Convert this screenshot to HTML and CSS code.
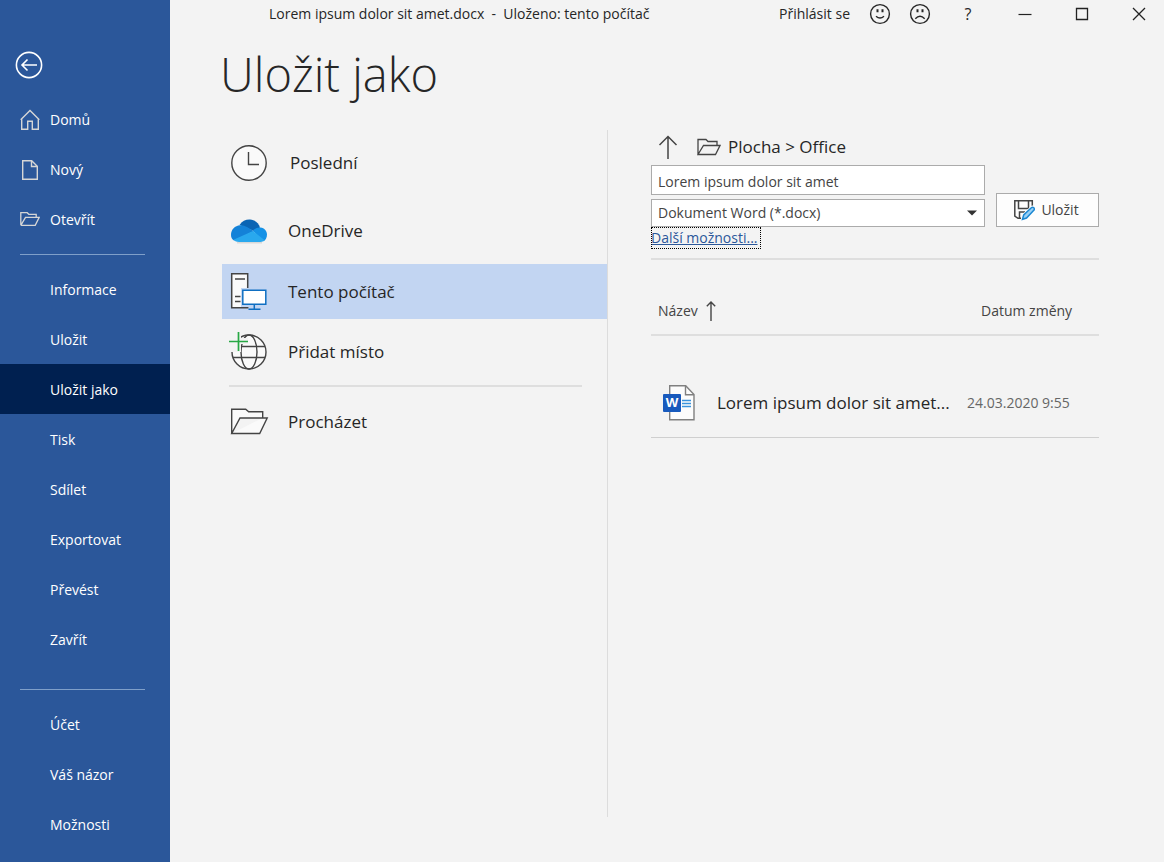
FILE: index.html
```html
<!DOCTYPE html>
<html lang="cs">
<head>
<meta charset="utf-8">
<meta name="viewport" content="width=device-width, initial-scale=1">
<title>Uložit jako</title>
<link rel="stylesheet" href="styles.css">
</head>
<body>
<div class="app">
  <nav class="sidebar" aria-label="Soubor">
    <button class="back" type="button" aria-label="Zpět">
      <svg width="28" height="28" viewBox="0 0 28 28" fill="none" stroke="#fff" stroke-width="1.6"><circle cx="14" cy="14" r="12.6"/><path d="M7 14h15M12.5 8.5 7 14l5.5 5.5"/></svg>
    </button>
    <a class="nav-item" href="#"><svg width="20" height="22" viewBox="0 0 20 22" fill="none" stroke="#d6d6d6" stroke-width="1.4"><path d="M.7 10.8 10 1.5l9.3 9.3M1.7 10v10.3h6v-8h4.6v8h6V10"/></svg>Domů</a>
    <a class="nav-item" href="#"><svg width="20" height="22" viewBox="0 0 20 22" fill="none" stroke="#d6d6d6" stroke-width="1.4"><path d="M2.7 1.7h9l5.6 5.6v13H2.7zM11.5 1.7v5.8h5.8"/></svg>Nový</a>
    <a class="nav-item" href="#"><svg width="20" height="22" viewBox="0 0 20 22" fill="none" stroke="#d6d6d6" stroke-width="1.3"><path d="M.8 16.3V3.700h6.400l1.600 1.600h7.400v3M.8 16.300h14.400l4-8H5.500L.8 16.300"/></svg>Otevřít</a>
    <hr class="nav-line">
    <a class="nav-item plain" href="#">Informace</a>
    <a class="nav-item plain" href="#">Uložit</a>
    <a class="nav-item plain current" href="#" aria-current="page">Uložit jako</a>
    <a class="nav-item plain" href="#">Tisk</a>
    <a class="nav-item plain" href="#">Sdílet</a>
    <a class="nav-item plain" href="#">Exportovat</a>
    <a class="nav-item plain" href="#">Převést</a>
    <a class="nav-item plain" href="#">Zavřít</a>
    <hr class="nav-line lower">
    <a class="nav-item plain" href="#">Účet</a>
    <a class="nav-item plain" href="#">Váš názor</a>
    <a class="nav-item plain" href="#">Možnosti</a>
  </nav>

  <div class="main">
    <header class="titlebar">
      <span class="doc-title">Lorem ipsum dolor sit amet.docx &nbsp;- &nbsp;Uloženo: tento počítač</span>
      <button class="sign-in" type="button">Přihlásit se</button>
      <button class="face" type="button" aria-label="Spokojenost"><svg width="22" height="22" viewBox="0 0 22 22" fill="none" stroke="#262626" stroke-width="1.4"><circle cx="11" cy="11" r="9.4"/><path d="M7 13.2q4 3.6 8 0"/><path d="M8.500 6.200v3M13.500 6.200v3" stroke-width="2"/></svg></button>
      <button class="face" type="button" aria-label="Nespokojenost"><svg width="22" height="22" viewBox="0 0 22 22" fill="none" stroke="#262626" stroke-width="1.4"><circle cx="11" cy="11" r="9.4"/><path d="M6.3 15.8q4.7-5 9.4 0"/><path d="M8.500 6.200v3M13.500 6.200v3" stroke-width="2"/></svg></button>
      <button class="help" type="button" aria-label="Nápověda">?</button>
      <button class="win" type="button" aria-label="Minimalizovat"><svg width="14" height="14" viewBox="0 0 14 14" stroke="#222"><path d="M.5 7.5h13" stroke-width="1.2"/></svg></button>
      <button class="win" type="button" aria-label="Maximalizovat"><svg width="14" height="14" viewBox="0 0 14 14" fill="none" stroke="#222" stroke-width="1.3"><path d="M1.5 1.5h11v11h-11z"/></svg></button>
      <button class="win" type="button" aria-label="Zavřít okno"><svg width="14" height="14" viewBox="0 0 14 14" stroke="#222" stroke-width="1.3"><path d="m1 1 12 12M13 1 1 13"/></svg></button>
    </header>

    <h1 class="heading">Uložit jako</h1>

    <div class="columns">
      <section class="places" aria-label="Umístění">
        <button class="place recent" type="button"><svg width="40" height="40" viewBox="0 0 40 40" fill="none" stroke="#444" stroke-width="1.4"><circle cx="20" cy="20" r="17.2" fill="#fafafa"/><path d="M19.5 9v12.5H30"/></svg>Poslední</button>
        <button class="place onedrive" type="button"><svg width="40" height="40" viewBox="0 0 40 40"><path d="M8 31.500h25" stroke="#d8d8d8" stroke-width="2"/><path fill="#0a64b4" d="M10.5 14C13 10 17 8.400 21 8.600c5 .3 8.600 3.400 10 8L25 20z"/><path fill="#1482d8" d="M2 24c0-5.500 4-9.500 9-9.800 3-.3 5 .6 7 1.800l7 4.200L5 29.500C3 28.300 2 26.500 2 24z"/><path fill="#1591e6" d="M24 20c2-2.600 4.500-3.800 7.500-3.500 4 .5 6.500 3.600 6.500 7.300 0 3-1.500 5.300-3.600 6.500z"/><path fill="#29a8ee" d="M4.500 28.800 24 20l11.700 9.300C34.500 30.600 33 31 31.500 31H10c-2.200 0-4.200-.8-5.500-2.200z"/></svg>OneDrive</button>
        <button class="place selected" type="button" aria-pressed="true"><svg width="40" height="40" viewBox="0 0 40 40" fill="none" stroke="#444" stroke-width="1.5"><path fill="#fafafa" d="M2.700 1.700h16v34h-16z"/><path d="M6 7h10M6 24.500h5.500M6 29.500h5.500"/><path d="M12 16h28v19H12z" fill="#c2d5f2" stroke="none"/><path fill="#fff" stroke="#0f6fc2" d="M13.800 18.300h23v14h-23z"/><path stroke="#0f6fc2" d="M25.300 32.300v4.600M19.500 37.200h12"/></svg>Tento počítač</button>
        <button class="place add" type="button"><svg width="40" height="40" viewBox="0 0 40 40" fill="none" stroke="#444" stroke-width="1.4"><circle cx="20" cy="20" r="17" fill="#fafafa"/><ellipse cx="20" cy="20" rx="8" ry="17"/><path d="M4 14.500h32M4 25.500h32"/><path d="M0 0h12v6h7v6h-7v8H0z" fill="#f3f3f3" stroke="none"/><path d="M9.500 0v19M0 9.500h19" stroke="#27a844" stroke-width="1.700"/></svg>Přidat místo</button>
        <hr class="place-line">
        <button class="place" type="button"><svg width="40" height="40" viewBox="0 0 40 40" fill="none" stroke="#444" stroke-width="1.4"><path fill="#fafafa" d="M2.700 31.500V7.200h14l3 2.500h14V16M2.700 31.500h28L38.200 16H11z"/></svg>Procházet</button>
      </section>

      <section class="details" aria-label="Soubory">
        <div class="path">
          <button class="up" type="button" aria-label="O úroveň výš"><svg width="20" height="24" viewBox="0 0 20 24" fill="none" stroke="#444" stroke-width="1.5"><path d="M10 1.500V24M1.500 10 10 1.500l8.500 8.500"/></svg></button>
          <svg width="24" height="18" viewBox="0 0 24 18" fill="none" stroke="#444" stroke-width="1.3"><path d="M1 16.500V1.500h8l2 2h9v4M1 16.500h17.500l4.500-9H6.500z"/></svg>
          <span>Plocha &gt; Office</span>
        </div>
        <form class="save-form" onsubmit="return false">
          <div class="fields">
            <input class="field" type="text" aria-label="Název souboru" value="Lorem ipsum dolor sit amet">
            <div class="select-box">
              <select class="field type" aria-label="Typ souboru"><option>Dokument Word (*.docx)</option></select>
              <svg class="caret" width="10" height="6" viewBox="0 0 10 6"><path fill="#333" d="M0 .5h10L5 5.500z"/></svg>
            </div>
          </div>
          <button class="save" type="submit"><svg width="22" height="22" viewBox="0 0 22 22" fill="none" stroke="#444" stroke-width="1.500"><path d="M8 19.300H5L1.800 17V1.800h17.500V9M5.500 2v7.500h10V2M6.500 19v-6H12"/><path d="m9.500 20.300 1.200-4.300 7.600-7.200a1.700 1.700 0 0 1 2.500 2.500L13.500 19z" fill="#fdfdfd" stroke="#fdfdfd" stroke-width="3"/><path d="m9.500 20.300 1.200-4.300 7.600-7.200a1.700 1.700 0 0 1 2.500 2.500L13.500 19z" fill="#9bd0f5" stroke="#1b87d2"/></svg>Uložit</button>
        </form>
        <a class="more" href="#">Další možnosti...</a>
        <table class="files">
          <thead>
            <tr><th scope="col"><span class="sort">Název<svg width="10" height="20" viewBox="0 0 10 20" fill="none" stroke="#444" stroke-width="1.400"><path d="M5 1v19M.8 5.200 5 1l4.200 4.200"/></svg></span></th><th class="date-head" scope="col">Datum změny</th></tr>
          </thead>
          <tbody>
            <tr><td><span class="file"><svg width="34" height="38" viewBox="0 0 34 38"><path d="M7.700 1.700h16l8.300 8.800v25.300H7.700z" fill="#fcfcfc" stroke="#808080" stroke-width="1.400"/><path d="M23.500 1.700v9H32" fill="none" stroke="#808080" stroke-width="1.400"/><path d="M20 16.500h9M20 19.500h9M20 22.500h9" stroke="#3a93dc" stroke-width="1.500"/><rect x="1" y="10" width="18" height="18" rx="1" fill="#185abd"/><text class="word" x="10" y="23" text-anchor="middle" fill="#fff">W</text></svg>Lorem ipsum dolor sit amet...</span></td><td class="date">24.03.2020 9:55</td></tr>
          </tbody>
        </table>
      </section>
    </div>
  </div>
</div>
</body>
</html>
```

FILE: styles.css
```css
* { box-sizing: border-box; }

body {
  margin: 0;
  background: #f3f3f3;
  color: #262626;
  font-family: "Open Sans", "Noto Sans", sans-serif;
  font-size: 14px;
  line-height: 20px;
}

button, input, select { font: inherit; color: inherit; }

button {
  border: 0;
  padding: 0;
  background: none;
  display: flex;
  align-items: center;
  justify-content: center;
}

svg { flex: none; display: block; }

.app { display: flex; min-height: 100vh; }

.sidebar {
  flex: none;
  width: 170px;
  padding-top: 51px;
  background: #2b579a;
  color: #fff;
}

.back { margin: 0 0 15px 15px; }

.nav-item {
  display: flex;
  align-items: center;
  gap: 10px;
  height: 50px;
  padding: 2px 0 0 20px;
  color: #fff;
  text-decoration: none;
}

.plain { padding-left: 50px; }
.current { background: #002050; }

.nav-line {
  height: 1px;
  margin: 10px 25px 9px 20px;
  border: 0;
  background: #7f9fc9;
}

.lower { margin-top: 25px; }

.main {
  flex: 1;
  min-width: 0;
  display: flex;
  flex-direction: column;
}

.titlebar {
  display: flex;
  align-items: center;
  height: 28px;
  padding-right: 18px;
}

.doc-title { flex: 1; padding-left: 99px; white-space: nowrap; }
.sign-in { margin-right: 19px; white-space: nowrap; }
.face { margin-right: 18px; }
.help { width: 20px; margin-left: 9px; font-size: 16px; }
.win { margin-left: 43px; }
.help + .win { margin-left: 40px; }

.heading {
  margin: 13px 0 0 50px;
  font-size: 47px;
  font-weight: 300;
  line-height: 66px;
}

.columns { display: flex; flex: 1; padding: 23px 65px 45px 52px; }

.places {
  flex: none;
  width: 386px;
  border-right: 1px solid #dcdcdc;
}

.place {
  justify-content: flex-start;
  gap: 19px;
  width: 100%;
  height: 61px;
  padding: 0 7px;
  font-size: 17px;
}

.recent { height: 66px; gap: 21px; }
.onedrive { height: 68px; padding-top: 2px; }
.selected { height: 55px; background: #c2d5f2; }
.add { height: 66px; }

.place-line {
  height: 2px;
  margin: 0 25px 4px 7px;
  border: 0;
  background: #dedede;
}

.details { flex: 1; min-width: 0; padding-left: 43px; }

.path {
  display: flex;
  align-items: center;
  height: 35px;
  padding: 0 0 2px 7px;
  font-size: 17px;
}

.up { margin-right: 19px; }
.path span { margin-left: 7px; }

.save-form { display: flex; align-items: flex-end; gap: 11px; }
.fields { flex: 1; display: grid; gap: 4px; }

.field {
  display: block;
  width: 100%;
  height: 30px;
  padding: 2px 6px 0;
  border: 1px solid #ababab;
  border-radius: 0;
  background: #fff;
  color: #444;
}

.select-box { position: relative; }
.type { height: 28px; padding: 0 6px; appearance: none; }

.caret {
  position: absolute;
  top: 11px;
  right: 8px;
  pointer-events: none;
}

.save {
  gap: 6px;
  width: 103px;
  height: 34px;
  padding-right: 3px;
  border: 1px solid #ababab;
  background: #fdfdfd;
  color: #444;
}

.more {
  display: inline-block;
  padding-right: 3px;
  outline: 1px dotted #000;
  outline-offset: -1px;
  color: #2b579a;
  line-height: 22px;
  vertical-align: top;
}

.files {
  width: 100%;
  margin-top: 9px;
  border-collapse: separate;
  border-spacing: 0;
  border-top: 2px solid #dedede;
  color: #444;
}

.files th {
  height: 76px;
  padding: 28px 0 0 7px;
  border-bottom: 2px solid #dedede;
  font-weight: 400;
  text-align: left;
}

.files .date-head { width: 132px; padding-left: 14px; }

.files td {
  height: 102px;
  padding: 32px 0 0;
  border-bottom: 1px solid #cfcfcf;
  white-space: nowrap;
}

.sort { display: flex; align-items: center; gap: 8px; }

.file {
  display: flex;
  align-items: center;
  gap: 21px;
  padding-left: 11px;
  color: #262626;
  font-size: 17px;
}

.files .date { color: #666; }
.word { font-size: 13px; font-weight: 700; }
```
